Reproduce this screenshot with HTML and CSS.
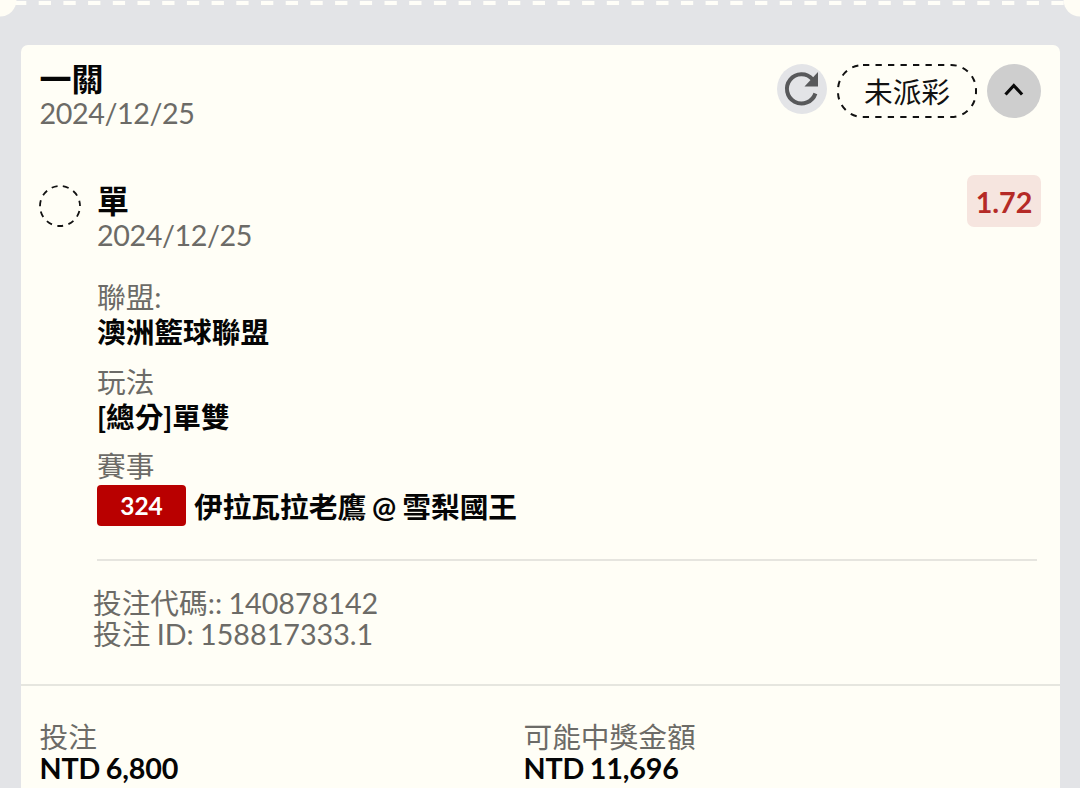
FILE: index.html
```
<!DOCTYPE html>
<html lang="zh-Hant">
<head>
    <meta charset="UTF-8">
    <title>投注</title>
    <link rel="stylesheet" href="styles.css">
</head>
<body>
<div class="ticket-top">
    <svg width="1080" height="18">
        <line x1="14" y1="3" x2="1066" y2="3" stroke="#fffef8" stroke-width="4" stroke-dasharray="12.300 12.400"/>
        <circle cx="0" cy="0" r="16.500" fill="#fffdf5"/>
        <circle cx="1080" cy="0" r="16.500" fill="#fffdf5"/>
    </svg>
</div>
<div class="card">
    <div class="head">
        <div class="head-text">
            <h2>一關</h2>
            <p class="date">2024/12/25</p>
        </div>
        <div class="refresh">
            <svg width="50" height="50" viewBox="0 0 50 50">
                <path d="M38.400 29.500A14.600 14.600 0 1 1 35.500 15.200" fill="none" stroke="#58595b" stroke-width="4"/>
                <path d="M41 8v14.500H27.500z" fill="#58595b"/>
            </svg>
        </div>
        <div class="status">
            <svg width="140" height="54">
                <rect x="1" y="1" width="138" height="52" rx="25" fill="none" stroke="#111" stroke-width="2" stroke-dasharray="6.300 6.200"/>
            </svg>
            <span>未派彩</span>
        </div>
        <div class="toggle">
            <svg width="54" height="54" viewBox="0 0 54 54">
                <path d="M18.500 30.500l8.300-9 8.300 9" fill="none" stroke="#0a0a0a" stroke-width="3.200"/>
            </svg>
        </div>
    </div>
    <div class="bet">
        <svg class="circle" width="42" height="42">
            <circle cx="21" cy="21" r="20" fill="none" stroke="#111" stroke-width="1.800" stroke-dasharray="6 5.424" stroke-dashoffset="-28"/>
        </svg>
        <div class="bet-body">
            <div class="bet-title">
                <div>
                    <h2>單</h2>
                    <p class="date">2024/12/25</p>
                </div>
                <span class="odds">1.72</span>
            </div>
            <dl>
                <dt>聯盟:</dt>
                <dd>澳洲籃球聯盟</dd>
                <dt>玩法</dt>
                <dd>[總分]單雙</dd>
                <dt>賽事</dt>
                <dd class="match"><span class="num">324</span><span>伊拉瓦拉老鷹 @ 雪梨國王</span></dd>
            </dl>
            <div class="codes">
                <p>投注代碼:: 140878142</p>
                <p>投注 ID: 158817333.1</p>
            </div>
        </div>
    </div>
    <div class="total">
        <div>
            <p>投注</p>
            <p class="money">NTD 6,800</p>
        </div>
        <div>
            <p>可能中獎金額</p>
            <p class="money">NTD 11,696</p>
        </div>
    </div>
</div>
</body>
</html>
```
FILE: styles.css
```
* {
    box-sizing: border-box;
    margin: 0;
    padding: 0;
}

body {
    height: 788px;
    overflow: hidden;
    background: #e3e4e7;
    color: #6c6b67;
    font-family: Lato, "Noto Sans CJK TC", sans-serif;
    font-size: 28.7px;
    line-height: 31px;
    word-spacing: -1px;
}

svg {
    display: block;
}

.ticket-top {
    height: 45px;
}

.card {
    width: 1039px;
    height: 760px;
    margin-left: 21px;
    background: #fffef6;
    border-radius: 7px;
}

h2 {
    font-size: 32px;
    line-height: 36px;
    color: #050505;
}

.date {
    margin-top: 1px;
    letter-spacing: -0.4px;
}

.head {
    display: flex;
    height: 140px;
    padding: 16px 19px 0 18.5px;
}

.head-text {
    flex: 1;
}

.refresh {
    width: 50px;
    height: 50px;
    margin: 3px 10px 0 0;
    border-radius: 50%;
    background: #e3e4e7;
}

.status {
    display: grid;
    width: 140px;
    height: 54px;
    margin: 3px 10px 0 0;
    color: #111;
}

.status svg,
.status span {
    grid-area: 1 / 1;
}

.status span {
    line-height: 56px;
    text-align: center;
}

.toggle {
    width: 54px;
    height: 54px;
    margin-top: 3px;
    border-radius: 50%;
    background: #cecece;
}

.bet {
    display: flex;
    height: 499px;
    padding-left: 18px;
}

.circle {
    flex: none;
    margin: 0 16px 0 0;
}

.bet-body {
    flex: 1;
}

.bet-title {
    display: flex;
    justify-content: space-between;
    height: 97px;
    padding-right: 19px;
}

.bet-title h2 {
    margin-top: -2px;
}

.odds {
    width: 74px;
    height: 52px;
    margin-top: -10px;
    border-radius: 7px;
    background: #f6e5df;
    color: #b52a26;
    font-weight: bold;
    line-height: 54px;
    text-align: center;
}

dl {
    height: 279px;
    margin-right: 23px;
    border-bottom: 2px solid #e6e5df;
}

dt {
    height: 33px;
}

dd {
    height: 51.500px;
    line-height: 34px;
    font-weight: bold;
    color: #050505;
}

.match {
    display: flex;
    padding-top: 1px;
    line-height: 45px;
}

.num {
    width: 89px;
    height: 41px;
    margin-right: 8px;
    border-radius: 4px;
    background: #b90000;
    color: #fff;
    font-size: 24.500px;
    line-height: 42px;
    text-align: center;
}

.codes {
    margin: 27px 0 0 -4px;
}

.total {
    display: grid;
    grid-template-columns: 484px 1fr;
    padding: 36px 18px 0 18.5px;
    border-top: 2px solid #e6e6df;
}

.money {
    font-weight: bold;
    color: #050505;
    letter-spacing: -0.15px;
    word-spacing: -1.3px;
}
```
